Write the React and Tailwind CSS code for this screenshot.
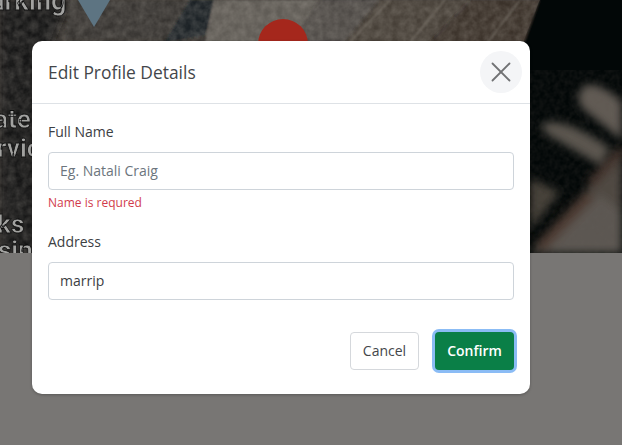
import { X } from "lucide-react";

const MapBackdrop = () => (
  <svg className="block w-full h-[253px]" viewBox="0 0 622 253" preserveAspectRatio="none">
    <defs>
      <filter id="soft"><feGaussianBlur stdDeviation="4" /></filter>
      <filter id="softer"><feGaussianBlur stdDeviation="1.2" /></filter>
      <filter id="textBlur"><feGaussianBlur stdDeviation="0.5" /></filter>
      <filter id="grain" x="0" y="0" width="100%" height="100%">
        <feTurbulence type="fractalNoise" baseFrequency="0.13" numOctaves="3" seed="4" />
        <feColorMatrix values="0 0 0 0 0.62  0 0 0 0 0.58  0 0 0 0 0.52  0.9 0 0 0 -0.18" />
      </filter>
      <filter id="pierGrain" x="0" y="0" width="100%" height="100%">
        <feTurbulence type="fractalNoise" baseFrequency="0.2" numOctaves="2" seed="9" />
        <feColorMatrix values="0 0 0 0 0.1  0 0 0 0 0.08  0 0 0 0 0.07  1.2 0 0 0 -0.3" />
      </filter>
      <clipPath id="land"><path d="M0 0H540L522 45V253H0Z" /></clipPath>
    </defs>

    <rect width="622" height="253" fill="#020707" />
    <path d="M0 0H540L500 70L440 253H0Z" fill="#3a3632" />
    <path d="M0 0H70L40 70L60 253H0Z" fill="#141413" filter="url(#soft)" />
    <path d="M70 0H215L190 40H65Z" fill="#383632" filter="url(#softer)" />
    <path d="M190 0H215L205 35L165 42Z" fill="#1c2327" filter="url(#softer)" />
    <path d="M213 0H320L300 42H205Z" fill="#605c56" filter="url(#softer)" />
    <path d="M320 0H380L345 42H290Z" fill="#504c46" filter="url(#softer)" />
    <path d="M380 0H470L430 42H345Z" fill="#473f39" filter="url(#softer)" />
    <path d="M470 0H540L525 42H430Z" fill="#3a312b" filter="url(#softer)" />
    <g clipPath="url(#land)">
      <rect width="622" height="253" filter="url(#grain)" opacity="0.35" />
      <path d="M390 0L350 42M445 0L410 42M520 0L488 42" stroke="#7b756c" strokeWidth="2" opacity="0.6" filter="url(#softer)" />
    </g>

    <path d="M78 0H110L94 27Z" fill="#5d7482" />
    <circle cx="283" cy="44" r="25" fill="#a5271c" />

    <g filter="url(#soft)">
      <path d="M530 253L622 150V253Z" fill="#4f4942" />
      <path d="M622 140L582 108Q572 90 590 84Q608 88 622 102Z" fill="#625c55" />
      <path d="M600 165L548 135Q534 122 552 122Q572 122 610 148Z" fill="#5c564f" />
      <path d="M530 178L560 192L530 230Z" fill="#453f38" />
      <path d="M540 253L600 195L622 212V253Z" fill="#5d5953" />
      <path d="M540 248L590 195" stroke="#4d3b30" strokeWidth="12" />
      <path d="M590 185L622 150" stroke="#42322a" strokeWidth="10" />
    </g>
    <rect x="530" y="70" width="92" height="183" filter="url(#pierGrain)" opacity="0.25" />

    <g fontFamily="Roboto, sans-serif" fontWeight="700" fill="#a2a2a0" stroke="#111111" strokeWidth="0.8" filter="url(#textBlur)">
      <text x="-10" y="10" fontSize="27">arking</text>
      <text x="-6" y="128" fontSize="26">ate</text>
      <text x="-3" y="157" fontSize="26">rvic</text>
      <text x="-3" y="233" fontSize="26">ks</text>
      <text x="-2" y="259" fontSize="26">sin</text>
    </g>
  </svg>
);

const Field = ({ label, placeholder, value, error, className }) => (
  <div className={className}>
    <label className="block text-[14px] leading-[21px] text-[#3c4043] mb-[10px]">{label}</label>
    <input
      type="text"
      readOnly
      placeholder={placeholder}
      value={value}
      className="block w-full h-[38px] pl-[11px] pr-3 pb-0.5 text-[14px] text-[#3c4043] placeholder:text-[#6c757d] bg-white border border-[#ced4da] rounded outline-none"
    />
    {error && <p className="mt-1 text-[12px] leading-[18px] text-[#d13b4c]">{error}</p>}
  </div>
);

const App = () => {
  return (
    <div className="relative h-[445px] w-[622px] overflow-hidden bg-[#787674] font-['Open_Sans',sans-serif]">
      <MapBackdrop />

      <div className="absolute inset-0 pl-[32px] pt-[41px]">
        <div className="w-[498px] bg-white rounded-[10px] shadow-[0_1px_3px_rgba(0,0,0,0.25)]">
          <div className="flex items-center justify-between h-[63px] pl-4 pr-2 border-b border-[#dee2e6]">
            <h2 className="text-[17.4px] text-[#43464a]">Edit Profile Details</h2>
            <button className="flex items-center justify-center w-[42px] h-[42px] rounded-full bg-[#f4f5f7] text-[#717274]">
              <X size={34} strokeWidth={1.25} />
            </button>
          </div>

          <form className="px-4 pt-[17px] pb-6">
            <Field label="Full Name" placeholder="Eg. Natali Craig" error="Name is requred" />
            <Field label="Address" value="marrip" className="mt-[19px]" />
            <div className="flex justify-end gap-4 mt-8">
              <button
                type="button"
                className="h-[38px] w-[69px] pb-0.5 text-[14px] text-[#43464a] bg-white border border-[#d5d8dc] rounded"
              >
                Cancel
              </button>
              <button
                type="button"
                className="h-[38px] w-[79px] pb-0.5 text-[14px] font-semibold text-white bg-[#0a7f47] rounded ring-[3px] ring-[#8bbcf5]"
              >
                Confirm
              </button>
            </div>
          </form>
        </div>
      </div>
    </div>
  );
};

export default App;
